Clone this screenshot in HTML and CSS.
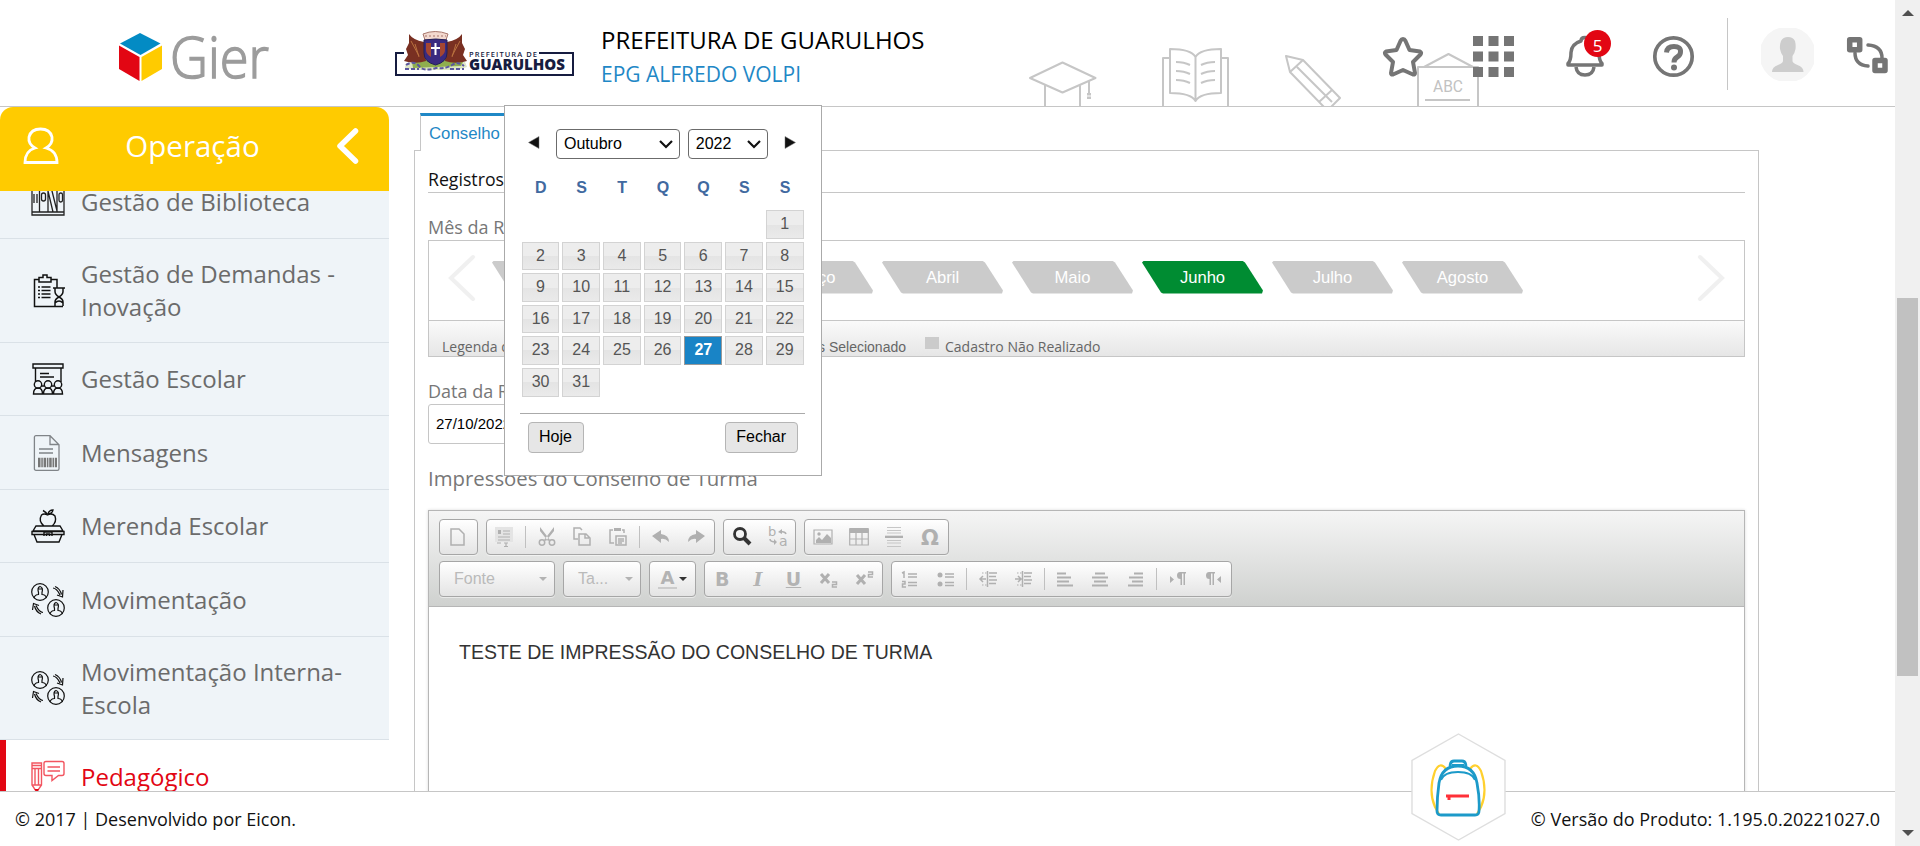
FILE: index.html
```html
<!DOCTYPE html>
<html lang="pt-BR">
<head>
<meta charset="utf-8">
<title>Gier - Conselho de Turma</title>
<link rel="stylesheet" href="styles.css">
</head>
<body>
<div class="app">
  <div class="page">
    <header class="header">
      <svg class="decor" width="460" height="106" viewBox="1020 0 460 106">
        <g fill="none" stroke="#c6c6c6" stroke-width="2" stroke-linejoin="round">
          <path d="M1030 78l32.500-15.500 33 15.500-33 14.500zM1045 85v21M1080 85v21M1089 81v12"/>
          <path d="M1089 93v6" stroke-width="4" stroke-dasharray="2.500 1"/>
          <path d="M1170 58h-7v48M1221 58h7v48M1170 49q21 0 25.500 8 4.500-8 25.500-8v44q-21 0-25.500 8-4.500-8-25.500-8zM1195.500 57v44"/>
          <path d="M1176 62q8 0 14 3M1176 71q8 0 14 3M1176 80q8 0 14 3M1215 62q-8 0-14 3M1215 71q-8 0-14 3M1215 80q-8 0-14 3"/>
          <path d="M1324 107l-34-35-4-16 17 4 37 38-9 9M1290 72l13-12M1297 67l35 35M1319 102l13-12"/>
          <path d="M1418 106V67h60v39M1424 67l24.500-13L1473 67M1425 100h45"/>
        </g>
        <text x="1433" y="92" class="decor-text" textLength="30" lengthAdjust="spacingAndGlyphs">ABC</text>
      </svg>
      <svg class="gier" width="154" height="50" viewBox="118 32 154 50">
        <path fill="#038bc4" d="M140 33l20.500 10.500L140.500 55 120 43.500z"/>
        <path fill="#e20613" d="M119 45.500l20.500 11.500V81L119 69z"/>
        <path fill="#ffcb00" d="M162 45.500L141.500 57V81L162 69z"/>
        <text x="170" y="78" class="gier-text" textLength="99" lengthAdjust="spacingAndGlyphs">Gier</text>
      </svg>
      <svg class="guarulhos" width="180" height="48" viewBox="394 30 180 48">
        <path fill="none" stroke="#161c40" stroke-width="2" d="M404 53h-8v22h177V53h-34"/>
        <path fill="#dde6c4" d="M406 63l59-1 2 5-10 3h-42l-10-2z"/>
        <path fill="#8fae4e" d="M412 62q10-5 24-1 15-5 27 1l-2 4-48 2z"/>
        <path fill="#793022" d="M409 34q4 6 15 8l2 19q-8 3-18 1l-4-1 4-6-2-6 3-6zM462 34q-4 6-15 8l-2 19q8 3 18 1l4-1-4-6 2-6-3-6z"/>
        <path stroke="#b9713f" fill="none" d="M411 41l8 15M415 44l4 13M460 41l-8 15M456 44l-4 13"/>
        <path fill="#f3d9cf" stroke="#a8776c" d="M425 40l-2-6q12-5 25 0l-2 6z"/>
        <path stroke="#a8776c" stroke-dasharray="2 2" d="M425 36h21"/>
        <path fill="#3a2a80" stroke="#222058" d="M424 40q12-2 23 0v13q0 9-11.500 12Q424 62 424 53z"/>
        <path fill="#a44632" d="M426 43h5v14q-5-3-5-7zM440 43h5v7q0 4-5 7z"/>
        <path stroke="#fff" stroke-width="2" fill="none" d="M435.500 43v12M431 48h9"/>
        <path stroke="#5b56a0" stroke-width="2" stroke-dasharray="4 2" fill="none" d="M406 65q8-5 13 1t17 2q10 1 16-3t12 1M405 69h14M450 69h14"/>
        <text x="469" y="57" class="g-small" textLength="68" lengthAdjust="spacing">PREFEITURA DE</text>
        <text x="469" y="69.500" class="g-big" textLength="96" lengthAdjust="spacingAndGlyphs">GUARULHOS</text>
      </svg>
      <div class="school">
        <div class="city">PREFEITURA DE GUARULHOS</div>
        <div class="unit">EPG ALFREDO VOLPI</div>
      </div>
      <nav class="tools">
        <svg class="t-star" width="42" height="42" viewBox="0 0 42 42"><path fill="#fff" stroke="#757575" stroke-width="4" stroke-linejoin="round" d="M21 3q1.500 0 2.500 2l4 9 10.500 1.500q2 1 .5 3L31 26l2 11q0 2-2 1.500L21 34l-10 4.500q-2 .5-2-1.500l2-11-7.500-7.500q-1.500-2 .5-3L14.500 14l4-9Q19.500 3 21 3z"/></svg>
        <svg class="t-grid" width="41" height="41" viewBox="0 0 41 41"><path fill="#757575" d="M0 0h10v10H0zM15.500 0h10v10h-10zM31 0h10v10H31zM0 15.500h10v10H0zM15.500 15.500h10v10h-10zM31 15.500h10v10H31zM0 31h10v10H0zM15.500 31h10v10h-10zM31 31h10v10H31z"/></svg>
        <span class="bell">
          <svg width="38" height="42" viewBox="0 0 38 42"><g fill="none" stroke="#757575" stroke-width="3.500" stroke-linejoin="round"><path d="M2 27.500q3-3 3-11Q5.500 8 15 5q0-3.500 4-3.500T23 5q9.500 3 10 11.500 0 8 3 11v1.500H2z"/><path d="M10 31q1 8 9 8t9-8"/></g></svg>
          <span class="badge">5</span>
        </span>
        <svg class="t-help" width="42" height="42" viewBox="0 0 42 42"><circle cx="20.500" cy="20.500" r="18.700" fill="none" stroke="#757575" stroke-width="3.700"/><path d="M13.500 16.500q.500-6 7.500-6t6.500 5.500q0 3-3.300 5t-3.200 5.500" fill="none" stroke="#757575" stroke-width="5"/><circle cx="21" cy="31.500" r="3" fill="#757575"/></svg>
        <span class="divider"></span>
        <svg class="t-avatar" width="53" height="53" viewBox="0 0 53 53"><path fill="#f5f5f5" d="M18 0h17q12 3 18 17v19q-6 14-18 17H18Q6 50 0 36V17Q6 3 18 0z"/><path fill="#cdcdcd" d="M20 13q2-4 7-4t7 4q1 4 .5 8-1 5-3 7v5q0 2 5 4 6 2 6 7H11q0-5 6-7 5-2 5-4v-5q-2-2-3-7-.500-4 1-8z"/></svg>
        <svg class="t-swap" width="42" height="38" viewBox="0 0 42 38"><g fill="none" stroke="#757575"><path stroke-width="5.500" stroke-linejoin="round" d="M2.700 2.700h10v10h-10zM28 23.500h10v10H28z"/><path stroke-width="3.500" stroke-linecap="round" d="M21 8q14 1 14 13M21 29Q8 28 8 16"/></g></svg>
      </nav>
    </header>

    <main class="main">
      <aside class="side">
        <div class="side-head">
          <svg width="36" height="37" viewBox="0 0 36 37"><path fill="none" stroke="#fff" stroke-width="2.800" d="M12 21Q5 17 6 10 8 2 17.500 2T29 10q1 7-6 11 11 3 11 14.500H2Q2 24 12 21z"/></svg>
          <span class="side-title">Operação</span>
          <svg width="23" height="38" viewBox="0 0 23 38"><path fill="none" stroke="#fff" stroke-width="5.500" stroke-linecap="round" stroke-linejoin="round" d="M19.500 4L4 19l15.500 15"/></svg>
        </div>
        <ul class="menu">
          <li class="item"><svg class="ic" viewBox="0 0 34 34"><g fill="none" stroke="#222" stroke-width="1.300"><path d="M1 2h32v28H1zM1 27h32M8.500 2v25M17 2v25M3 9v9M6 9v9M17 6l5 21M20 2l6 24M26 2v25"/><rect x="10.500" y="8" width="4" height="8" rx="2"/><rect x="28" y="8" width="3.500" height="9" rx="1.700"/></g></svg><span class="up1">Gestão de Biblioteca</span></li>
          <li class="item two"><svg class="ic" viewBox="0 0 34 34"><g fill="none" stroke="#111" stroke-width="1.500"><path d="M8 5.500H3.500v27H32M20 5.500h6V14M8 3.500h4V1h4v2.500h4V8H8zM22 14h12M24 14.500v3q0 3 4 5.500 4-2.500 4-5.500v-3M24 32v-4q0-3 4-5 4 2 4 5v4M24 29q4-4 8 0"/><path stroke-width="1.600" d="M10.500 13h9M10.500 16.500h9M10.500 20h9M10.500 23.500h9" /><path stroke-width="1.600" d="M7 13h2M7 16.500h2M7 20h2M7 23.500h2"/></g></svg><span class="up1">Gestão de Demandas -<br>Inovação</span></li>
          <li class="item"><svg class="ic" viewBox="0 0 34 34"><g fill="none" stroke="#111" stroke-width="1.400"><path d="M2 2h30v4H2zM4.500 6v14M30 6v14M9 11.500h9M9 15h14M10.500 24h2.500M20.500 24H23"/><circle cx="7" cy="22.500" r="3.700"/><circle cx="17" cy="22.500" r="3.700"/><circle cx="27" cy="22.500" r="3.700"/><path d="M2.500 32q0-6 4.500-6t4.500 6zM12.500 32q0-6 4.500-6t4.500 6zM22.500 32q0-6 4.500-6t4.500 6z"/></g></svg><span class="up1">Gestão Escolar</span></li>
          <li class="item tall"><svg class="ic big" viewBox="0 0 34 36"><g fill="none" stroke="#808488" stroke-width="1.300"><path d="M5 .7h14l9 9v24q0 1.600-1.600 1.600H5q-1.600 0-1.600-1.600V2.300Q3.400.7 5 .7zM19 1v8.500h9M8 14h14M8 18h14"/></g><path stroke="#777" stroke-width="9.500" stroke-dasharray="2.500 .8 1.500 .8" d="M7 27.500h19"/></svg><span>Mensagens</span></li>
          <li class="item"><svg class="ic" viewBox="0 0 34 34"><g fill="none" stroke="#111" stroke-width="1.400"><path d="M13 17q-6-5-2.500-11Q13 4 16.500 6 21 3.500 24 7q2 6-3 10M16.500 6Q15 3 12 1.500M17 5q1-4 5-4-.5 3.500-5 4M5 17h24l3 5H2zM1 22.500h32v3H1zM3 25.500L6 33h22l3-7.500M13 27v-4h8v4M15.500 27v-2h3v2"/></g></svg><span class="up1">Merenda Escolar</span></li>
          <li class="item tall"><svg class="ic" viewBox="0 0 34 34"><g id="people" fill="none" stroke="#111" stroke-width="1.200"><circle cx="9" cy="9" r="8.300"/><path d="M3 15q1-3.500 4.500-3.500v-2q-1.500-5 1.500-6 3.500 1 2 6v2q3.500 0 4.500 3.500M6.500 6h5"/><circle cx="25" cy="25" r="8.300"/><path d="M19 31q1-3.500 4.500-3.500v-2q-1.500-5 1.500-6 3.500 1 2 6v2q3.500 0 4.500 3.500M22.500 22h5"/><path d="M22 5q4 .5 7 7M24 3.500q5 2 6.500 8M26 12l5.500 2L32 7M12 29.500q-4-.5-7-7M10 31q-5-2-6.500-8M8 22.500L2.500 20.500 1.500 27"/></g></svg><span>Movimentação</span></li>
          <li class="item two short"><svg class="ic" viewBox="0 0 34 34"><use href="#people"/></svg><span>Movimentação Interna-<br>Escola</span></li>
          <li class="item active"><svg class="ic" viewBox="0 0 34 34"><g fill="none" stroke="#f25560" stroke-width="1.400"><path d="M1 4h9.500v22L5.700 33 1 26zM1 6.500h9.500M1 9.500h9.500M1 26h9.500M4 10v16M7.500 10v16M15 2.500h16q2 0 2 2v10q0 2-2 2h-3.500L21 21.500v-5h-6q-2 0-2-2v-10q0-2 2-2zM16.500 8h12.500M16.500 12h12.500"/></g><path fill="#e20613" d="M3.500 30h4.500l-2.300 4z"/></svg><span>Pedagógico</span></li>
        </ul>
      </aside>

      <section class="content">
        <div class="tabs"><div class="tab">Conselho</div></div>
        <div class="panel">
          <h2 class="section-title">Registros</h2>
          <div class="label month-label">Mês da Reunião</div>
          <div class="months">
            <div class="track">
              <svg class="arrow" width="28" height="48" viewBox="0 0 28 48"><path fill="none" stroke="#f0f0f0" stroke-width="4" stroke-linecap="round" d="M25 3L3 24l22 21"/></svg>
              <div class="month-list">
                <span class="month"></span><span class="month"></span><span class="month">Março</span><span class="month">Abril</span><span class="month">Maio</span><span class="month on">Junho</span><span class="month">Julho</span><span class="month">Agosto</span>
              </div>
              <svg class="arrow" width="28" height="48" viewBox="0 0 28 48"><path fill="none" stroke="#f0f0f0" stroke-width="4" stroke-linecap="round" d="M3 3l22 21L3 45"/></svg>
            </div>
            <div class="legend"><span class="legend-a">Legenda de</span><span class="legend-b">Mês Selecionado</span><i class="swatch"></i><span>Cadastro Não Realizado</span></div>
          </div>
          <div class="label date-label">Data da Reunião</div>
          <div class="date">27/10/2022</div>
          <div class="label big-label">Impressões do Conselho de Turma</div>
          <div class="editor">
            <div class="toolbar">
              <div class="row">
                <div class="group one"><span class="b"><svg viewBox="0 0 20 20"><path class="s" d="M3 2h8l5 5v11H3z"/></svg></span></div>
                <div class="group"><span class="b"><svg viewBox="0 0 20 20"><path fill="#e4e4e4" d="M1 0h18v15H1z"/><path class="s thin" d="M9 4h7M9 7h7M4 10h12M4 13h12M3 16h4M10 16h4M10 19.500h4M12 16v4"/><path class="f" d="M4 3h3v4H4z"/></svg></span><i class="sep"></i><span class="b"><svg viewBox="0 0 20 20"><path class="f" d="M3 0l10 13-2 1L3 4zM17 0L7 13l2 1 8-10z"/><circle class="s" cx="5" cy="15.500" r="2.700"/><circle class="s" cx="15" cy="15.500" r="2.700"/></svg></span><span class="b"><svg viewBox="0 0 20 20"><path class="s" d="M5 12H1V1h6l2 2M6 7h7l4 4v7H6zM12 7v4h4"/></svg></span><span class="b"><svg viewBox="0 0 20 20"><path class="s" d="M5 3H2v13h4M14 3h2v3M8 9h10v9H8zM10 12h6M10 14h6M10 16h4"/><path class="f" d="M6 1h7v3H6z"/></svg></span><i class="sep"></i><span class="b"><svg viewBox="0 0 20 20"><path class="f" d="M1 9l9-6v4q8 1 8 8-4-4-8-3v4z"/></svg></span><span class="b"><svg viewBox="0 0 20 20"><path class="f" d="M19 9l-9-6v4q-8 1-8 8 4-4 8-3v4z"/></svg></span></div>
                <div class="group"><span class="b"><svg viewBox="0 0 20 20"><circle cx="8" cy="7" r="5.500" fill="none" stroke="#333" stroke-width="2.800"/><path d="M12 11l6 6" stroke="#333" stroke-width="4"/></svg></span><span class="b"><svg viewBox="0 0 20 20"><text class="f t" x="0" y="9" font-size="13">b</text><text class="f t" x="11" y="19" font-size="14">a</text><path class="s" d="M18 7q-1-3-6-2M2 12q0 3 6 3"/><path class="f" d="M10 5l4-3v5zM9 15l-3-3v6z"/></svg></span></div>
                <div class="group"><span class="b"><svg viewBox="0 0 20 20"><path class="s thin" d="M1 3h18v14H1z"/><path class="f" d="M3 16v-3l3-3 3 3 5-6 4 4v5z"/><circle class="f" cx="6" cy="7" r="1.700"/></svg></span><span class="b"><svg viewBox="0 0 20 20"><path class="s thin" d="M.7 2h18.600v16H.7zM1 12h18M7 5v13M13 5v13"/><path class="f" d="M.500 1h19v5H.500z"/></svg></span><span class="b"><svg viewBox="0 0 20 20"><path class="f" d="M1 8.700h18v2.300H1z"/><path stroke="#c6c6c6" d="M3 .5h14M3 3.500h14M3 6h14M3 13.500h14M3 16h14M3 19.500h14"/></svg></span><span class="b"><svg viewBox="0 0 20 20"><text class="f t bolder" x="1" y="18" font-size="21">Ω</text></svg></span></div>
              </div>
              <div class="row">
                <div class="group combo font"><span>Fonte</span><i class="caret light"></i></div>
                <div class="group combo size"><span>Ta...</span><i class="caret light"></i></div>
                <div class="group color"><span class="color-a">A</span><i class="caret"></i></div>
                <div class="group marks"><span class="b g bold">B</span><span class="b g ital">I</span><span class="b g und">U</span><span class="b"><svg viewBox="0 0 20 20"><path class="s heavy" d="M2 5l8 9M10 5l-8 9"/><path class="s" d="M13 13h4.500v2.500h-4V18H18"/></svg></span><span class="b"><svg viewBox="0 0 20 20"><path class="s heavy" d="M2 6l8 9M10 6l-8 9"/><path class="s" d="M13 3h4.500v2.500h-4V8H18"/></svg></span></div>
                <div class="group tight"><span class="b"><svg viewBox="0 0 20 20"><path class="s" d="M8 5h9M8 8h9M8 13.500h9M8 16.500h9M2 4l2-1v6M2 12.500h3v2.500H2.500v3H6"/></svg></span><span class="b"><svg viewBox="0 0 20 20"><path class="s" d="M9 5h9M9 8h9M9 13.500h9M9 16.500h9"/><circle class="f" cx="4" cy="6" r="2.500"/><circle class="f" cx="4" cy="15" r="2.500"/></svg></span><i class="sep"></i><span class="b"><svg viewBox="0 0 20 20"><path class="s" d="M9.500 2v16M11 4h8M11 7.500h7M11 11h8M11 14.500h7M2 10h6M5 7l-3 3 3 3"/><path class="s thin" stroke-dasharray="1.500 1.500" d="M4 4h5M4 16h5"/></svg></span><span class="b"><svg viewBox="0 0 20 20"><path class="s" d="M9.500 2v16M11 4h8M11 7.500h7M11 11h8M11 14.500h7M2 10h6M5 7l3 3-3 3"/><path class="s thin" stroke-dasharray="1.500 1.500" d="M4 4h5M4 16h5"/></svg></span><i class="sep"></i><span class="b"><svg viewBox="0 0 20 20"><path class="s wide" d="M2 4.500h9M2 8.500h14M2 12.500h12M2 16.500h16"/></svg></span><span class="b"><svg viewBox="0 0 20 20"><path class="s wide" d="M5 4.500h10M2 8.500h16M4 12.500h12M2 16.500h16"/></svg></span><span class="b"><svg viewBox="0 0 20 20"><path class="s wide" d="M8 4.500h9M3 8.500h14M6 12.500h11M2 16.500h15"/></svg></span><i class="sep"></i><span class="b"><svg viewBox="0 0 20 20"><path class="f" d="M2 7l4 3.500L2 14zM12 3h6v1.500h-1V16h-1.500V4.500H14V16h-1.500v-6Q9 10 9 6.500T12 3z"/></svg></span><span class="b"><svg viewBox="0 0 20 20"><path class="f" d="M18 7l-4 3.500 4 3.500zM6 3h6v1.500h-1V16H9.500V4.500H8V16H6.500v-6Q3 10 3 6.500T6 3z"/></svg></span></div>
              </div>
            </div>
            <div class="editable">TESTE DE IMPRESSÃO DO CONSELHO DE TURMA</div>
          </div>
        </div>
      </section>
    </main>

    <footer class="footer">
      <span class="copy">© 2017 | Desenvolvido por Eicon.</span>
      <span class="version">© Versão do Produto: 1.195.0.20221027.0</span>
    </footer>

    <svg class="bag" width="95" height="108" viewBox="0 0 95 108">
      <path fill="#fff" stroke="#dedede" stroke-width="1.400" d="M47.500 1L94 27.500v53L47.500 107 1 80.500v-53z"/>
      <g fill="none" stroke-width="2.200">
        <path stroke="#ffd02e" d="M35 36q-6-8-11 2-7 20 0 36l4 7M59 36q6-8 11 2 7 20 0 36l-4 7"/>
        <path stroke="#1c9ac9" stroke-width="2.800" d="M39 34q0-6 4-6h8q4 0 4 6M28 50q3-17 19-17t19 17q3 16 2 28 0 4-4 4H30q-4 0-4-4 0-14 2-28z"/>
        <path stroke="#1c9ac9" stroke-width="2" d="M41 32h12M30 47q3-8 17-8t17 8"/>
        <path stroke="#ff3038" stroke-width="3" d="M35 63h23M38 63v4"/>
      </g>
    </svg>

    <div class="calendar">
      <div class="cal-nav">
        <svg width="12" height="13" viewBox="0 0 12 13"><path fill="#111" stroke="#777" stroke-width=".5" d="M11 .5v12L.5 6.500z"/></svg>
        <span class="select month-sel">Outubro<svg width="14" height="9" viewBox="0 0 14 9"><path fill="none" stroke="#111" stroke-width="2.200" d="M1 1l6 6 6-6"/></svg></span>
        <span class="select year-sel">2022<svg width="14" height="9" viewBox="0 0 14 9"><path fill="none" stroke="#111" stroke-width="2.200" d="M1 1l6 6 6-6"/></svg></span>
        <svg width="12" height="13" viewBox="0 0 12 13"><path fill="#111" stroke="#777" stroke-width=".5" d="M1 .5v12l10.500-6z"/></svg>
      </div>
      <div class="week"><b>D</b><b>S</b><b>T</b><b>Q</b><b>Q</b><b>S</b><b>S</b></div>
      <div class="days">
        <span class="d first">1</span>
        <span class="d">2</span><span class="d">3</span><span class="d">4</span><span class="d">5</span><span class="d">6</span><span class="d">7</span><span class="d">8</span>
        <span class="d">9</span><span class="d">10</span><span class="d">11</span><span class="d">12</span><span class="d">13</span><span class="d">14</span><span class="d">15</span>
        <span class="d">16</span><span class="d">17</span><span class="d">18</span><span class="d">19</span><span class="d">20</span><span class="d">21</span><span class="d">22</span>
        <span class="d">23</span><span class="d">24</span><span class="d">25</span><span class="d">26</span><span class="d sel">27</span><span class="d">28</span><span class="d">29</span>
        <span class="d">30</span><span class="d">31</span>
      </div>
      <div class="cal-foot"><span class="btn">Hoje</span><span class="btn">Fechar</span></div>
    </div>
  </div>

  <div class="scroll">
    <i class="up"></i>
    <i class="thumb"></i>
    <i class="down"></i>
  </div>
</div>
</body>
</html>
```
FILE: styles.css
```css
* { box-sizing: border-box; }
body { margin: 0; background: #fff; font-family: "Open Sans", "Noto Sans", sans-serif; overflow: hidden; }
svg { display: block; flex: none; overflow: visible; }

.app { display: flex; width: 1920px; height: 846px; }
.page { position: relative; display: flex; flex-direction: column; width: 1895px; height: 846px; }

/* header */
.header { position: relative; flex: none; display: flex; height: 107px; border-bottom: 1px solid #c6c6c6; padding-left: 118px; }
.decor { position: absolute; left: 1020px; top: 0; overflow: hidden; }
.decor-text { font: 17px Roboto, sans-serif; fill: #c2c2c2; }
.gier { margin-top: 32px; }
.gier-text { font: 300 57px "Open Sans", sans-serif; fill: #9c9c9c; stroke: #9c9c9c; stroke-width: 1.500px; }
.guarulhos { margin: 30px 0 0 122px; }
.g-small { font: 600 7.500px "Open Sans", sans-serif; fill: #161c40; }
.g-big { font: 800 15px "Open Sans", sans-serif; fill: #161c40; }
.school { margin-left: 27px; padding-top: 23px; width: 400px; white-space: nowrap; }
.city { font-size: 24px; line-height: 34px; color: #000; }
.unit { font-size: 21px; line-height: 34px; color: #1f88c6; }
.tools { position: relative; display: flex; align-items: flex-start; margin-left: 381px; }
.t-star { margin-top: 36px; }
.t-grid { margin: 36px 0 0 49px; }
.bell { position: relative; margin: 36px 0 0 52px; }
.badge { position: absolute; left: 18px; top: -6px; width: 27px; height: 27px; border-radius: 50%; background: #e20613; color: #fff; font-size: 17px; line-height: 32px; text-align: center; }
.t-help { margin: 36px 0 0 49px; }
.divider { width: 1px; height: 72px; margin: 18px 0 0 32px; background: #c6c6c6; }
.t-avatar { margin: 28px 0 0 33px; }
.t-swap { margin: 37px 0 0 33px; }

/* body */
.main { display: flex; height: 684px; overflow: hidden; flex: none; }
.side { flex: none; width: 389px; }
.side-head { position: relative; z-index: 1; display: flex; align-items: center; height: 84px; padding: 0 30px 0 23px; background: #ffcb00; border-radius: 13px 13px 0 0; color: #fff; justify-content: space-between; }
.side-head svg { margin-top: -7px; }
.side-title { font-size: 29.500px; line-height: 40px; margin: -7px 10px 0 0; }
.menu { list-style: none; margin: -25px 0 0; padding: 0; }
.item { display: flex; align-items: center; height: 73px; padding-left: 31px; gap: 16px; background: #eff4f8; border-bottom: 1px solid #dae1e7; color: #6b6b6b; font-size: 24px; line-height: 33px; white-space: nowrap; }
.item.tall { height: 74px; }
.item.two { height: 104px; }
.item.short { height: 103px; }
.item.active { background: #fff; color: #e20613; border-left: 6px solid #e20613; padding-left: 25px; }
.up1 { margin-top: -2px; }
.ic { width: 34px; height: 34px; }
.ic.big { height: 36px; }

.content { flex: none; margin-left: 25px; width: 1345px; padding-top: 6px; font-family: "Liberation Sans", Arial, sans-serif; }
.tabs { display: flex; padding-left: 6px; height: 37px; }
.tab { position: relative; width: 170px; height: 38px; margin-bottom: -1px; border: 1px solid #c6c6c6; border-top: 3px solid #1f88c6; border-bottom: 0; background: #fff; padding: 8px 0 0 8px; font-size: 16.800px; line-height: 20px; color: #1f88c6; }
.panel { height: 760px; border: 1px solid #c6c6c6; padding: 0 13px; }
.section-title { margin: 15px 0 0; height: 27px; border-bottom: 1px solid #c6c6c6; font: 500 17.700px/26px "Open Sans", sans-serif; color: #111; }
.label { font-family: "Open Sans", sans-serif; color: #777; font-size: 18px; line-height: 24px; white-space: nowrap; }
.month-label { margin-top: 22px; height: 25px; }
.months { height: 117px; border: 1px solid #c6c6c6; }
.track { display: flex; align-items: center; height: 79px; padding: 0 19px; }
.arrow { margin-top: -6px; }
.month-list { display: flex; gap: 9px; margin: -7px auto 0 16px; }
.month { width: 121px; height: 33px; line-height: 33px; text-align: center; font-size: 16.600px; color: #fff; background: #cbcbcb; clip-path: polygon(0 2px, 2px 0, 100px 0, 103px 2px, 100% 30px, 120px 100%, 21px 100%, 19px 32px); }
.month.on { background: #008c32; }
.legend { display: flex; height: 36px; border-top: 1px solid #c6c6c6; background: linear-gradient(#fafafa, #e6e6e6); padding: 16px 0 0 13px; font: 14px/20px "Open Sans", sans-serif; color: #666; white-space: nowrap; }
.legend-a { width: 356px; }
.legend-b { width: 108px; text-align: right; font-family: "Liberation Sans", Arial, sans-serif; }
.swatch { width: 14px; height: 12px; margin: 0 6px 0 19px; background: #cbcbcb; }
.date-label { margin-top: 22px; height: 25px; }
.date { width: 200px; height: 40px; border: 1px solid #c6c6c6; border-radius: 3px; padding: 0 7px; line-height: 38px; font-size: 15px; color: #000; }
.big-label { margin-top: 20px; height: 46px; line-height: 28px; font-size: 20.350px; }

.editor { border: 1px solid #b6b6b6; height: 400px; box-shadow: 0 0 3px rgba(0,0,0,.15); }
.toolbar { height: 96px; border-bottom: 1px solid #b6b6b6; background: linear-gradient(#f5f5f5, #cfd1cf); padding: 8px 0 0 10px; display: flex; flex-direction: column; gap: 6px; }
.row { display: flex; gap: 8px; height: 36px; }
.group { display: flex; align-items: center; height: 36px; border: 1px solid #a6a6a6; border-radius: 4px; background: linear-gradient(#fff, #e4e4e4); box-shadow: 0 1px 0 rgba(255,255,255,.5); }
.one { width: 38.600px; }
.b { display: flex; justify-content: center; width: 35.600px; }
.b svg { width: 20px; height: 20px; }
.s { fill: none; stroke: #b0b0b0; stroke-width: 1.500px; }
.s.thin { stroke-width: 1.200px; }
.s.wide { stroke-width: 2.200px; }
.s.heavy { stroke-width: 3px; }
.f { fill: #b0b0b0; }
.t { font-family: "DejaVu Sans", sans-serif; }
.bolder { font-weight: 700; }
.sep { width: 1px; height: 22px; margin: 0 3px; background: #c0c0c0; }
.tight .sep { margin: 0 2.700px; }
.tight .b { width: 35.500px; }
.combo { justify-content: space-between; color: #bababa; font-size: 16px; padding: 0 7px 0 14px; }
.font { width: 116px; }
.size { width: 78px; }
.caret { border: 4px solid transparent; border-top-color: #333; border-bottom: 0; }
.caret.light { border-top-color: #b3b3b3; }
.color { width: 47px; padding: 0 8px; justify-content: space-between; }
.marks { margin-left: -.5px; }
.color-a { width: 19px; height: 20px; border-bottom: 2px solid #ccc; color: #b3b3b3; font: 700 18px/17px "DejaVu Sans", sans-serif; text-align: center; }
.g { font: 700 19px/24px "DejaVu Sans", sans-serif; color: #b3b3b3; }
.ital { font-family: "DejaVu Serif", serif; font-style: italic; }
.und { text-decoration: underline; }
.editable { padding: 33px 30px; font-size: 19.500px; line-height: 24px; color: #333; }

/* footer */
.footer { flex: none; display: flex; justify-content: space-between; height: 55px; border-top: 1px solid #c6c6c6; padding: 13px 15px 0 15px; font-size: 18px; line-height: 28px; color: #111; }
.bag { position: absolute; left: 1411px; top: 733px; }

/* date picker */
.calendar { position: absolute; left: 504px; top: 105px; width: 318px; height: 371px; border: 1px solid #aaa; background: #fff; font: 16px "Liberation Sans", Arial, sans-serif; padding: 23px 16px 0 15px; }
.cal-nav { display: flex; height: 30px; padding: 0 9px 0 8px; }
.cal-nav > svg { margin-top: 7px; }
.select { display: flex; align-items: center; justify-content: space-between; height: 30px; border: 1px solid #6b6b6b; border-radius: 4px; padding: 0 6px 0 7px; color: #000; }
.month-sel { width: 125px; margin-left: 16px; }
.year-sel { width: 81px; margin: 0 16px 0 8px; }
.week { display: grid; grid-template-columns: repeat(7, 37.700px); gap: 3px; margin: 19px 0 0 2px; height: 32px; line-height: 20px; text-align: center; color: #4169a0; }
.days { display: grid; grid-template-columns: repeat(7, 37.700px); grid-auto-rows: 28.600px; gap: 3px; margin-left: 1.700px; }
.d { border: 1px solid #d3d3d3; background: linear-gradient(#ededed 50%, #e4e4e4 50%, #eaeaea); color: #555; text-align: center; line-height: 26.500px; }
.first { grid-column: 7; }
.sel { background: #1984c6; border-color: #999; color: #fff; font-weight: 700; }
.cal-foot { display: flex; justify-content: space-between; margin-top: 16px; border-top: 1px solid #aaa; padding: 8px 7px 0 8px; }
.btn { height: 31px; border: 1px solid #b5b5b5; border-radius: 4px; background: #e6e6e6; color: #000; padding: 0 11px 0 10px; line-height: 28px; }

/* scrollbar */
.scroll { display: flex; flex-direction: column; align-items: center; width: 25px; height: 846px; background: #f0f0f0; padding: 10px 0; }
.up { border: 6px solid transparent; border-bottom-color: #505050; border-top: 0; }
.thumb { width: 21px; height: 378px; margin-top: 282px; background: #c1c1c1; }
.down { border: 6px solid transparent; border-top-color: #505050; border-bottom: 0; margin-top: auto; }
```
